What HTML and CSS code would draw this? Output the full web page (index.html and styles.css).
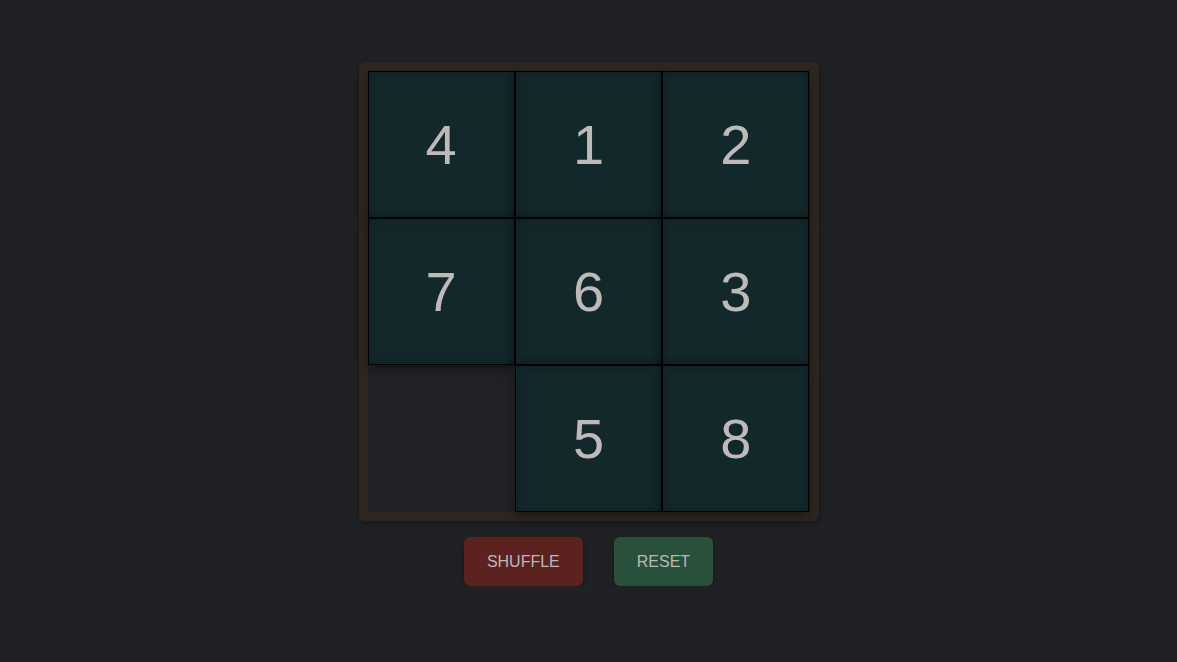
FILE: index.html
```html
<!DOCTYPE html>
<html lang="en">
<head>
<meta charset="utf-8">
<title>Sliding Puzzle</title>
<link rel="stylesheet" href="styles.css">
</head>
<body>
<main class="app">
  <div class="board">
    <div class="tile">4</div>
    <div class="tile">1</div>
    <div class="tile">2</div>
    <div class="tile">7</div>
    <div class="tile">6</div>
    <div class="tile">3</div>
    <div class="empty"></div>
    <div class="tile">5</div>
    <div class="tile">8</div>
  </div>
  <div class="controls">
    <button class="btn btn-shuffle">Shuffle</button>
    <button class="btn btn-reset">Reset</button>
  </div>
</main>
</body>
</html>
```

FILE: styles.css
```css
html, body {
  margin: 0;
  padding: 0;
  background: #202124;
  font-family: "Liberation Sans", Arial, sans-serif;
}

.app {
  display: flex;
  flex-direction: column;
  align-items: center;
  padding-top: 62px;
  gap: 16px;
}

.board {
  width: 442px;
  height: 441px;
  border: 9px solid #2e2620;
  border-radius: 6px;
  background: #212225;
  display: grid;
  grid-template-columns: repeat(3, 1fr);
  grid-template-rows: repeat(3, 1fr);
  box-shadow: 0 2px 6px rgba(0, 0, 0, 0.3);
}

.tile {
  position: relative;
  display: flex;
  align-items: center;
  justify-content: center;
  background: #13282b;
  border: 1px solid #000;
  color: #bfbaba;
  font-size: 56px;
  box-shadow: inset 0 0 10px rgba(0, 0, 0, 0.25), 0 4px 10px rgba(0, 0, 0, 0.4);
}

.empty {
  background: transparent;
}

.controls {
  display: flex;
  gap: 31px;
}

.btn {
  border: none;
  border-radius: 6px;
  padding: 16px 23px;
  font-family: "Liberation Sans", Arial, sans-serif;
  font-size: 16px;
  line-height: 17px;
  text-transform: uppercase;
  color: #bdb8b8;
  box-shadow: 0 3px 5px rgba(0, 0, 0, 0.35);
  cursor: pointer;
}

.btn-shuffle {
  background: #5c2220;
}

.btn-reset {
  background: #28503a;
}
```
